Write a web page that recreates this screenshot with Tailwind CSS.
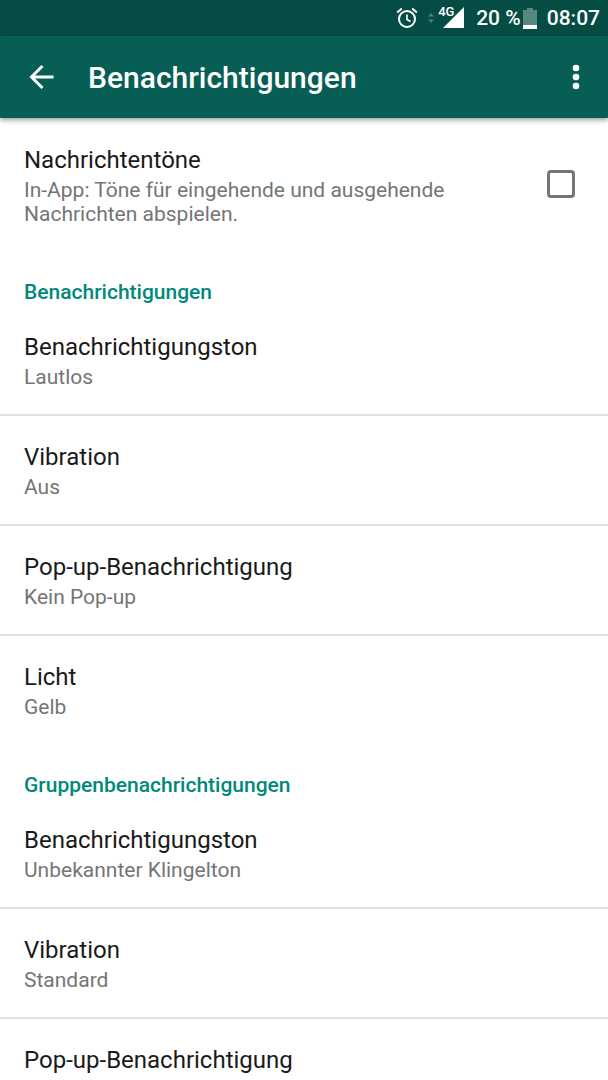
<!doctype html>
<html lang="de">
<head>
  <meta charset="UTF-8">
  <meta name="viewport" content="width=device-width, initial-scale=1.0">
  <title>Benachrichtigungen</title>
  <script src="https://cdn.jsdelivr.net/npm/@tailwindcss/browser@4"></script>
</head>
<body class="h-screen overflow-hidden bg-white font-['Roboto',sans-serif] text-[#1a1a1a]">

<div id="app" class="flex flex-col w-full">
  <!-- Status bar -->
  <div class="flex items-center justify-end h-9 pr-2 bg-[#054d44] text-white text-[21px] leading-6 font-medium">
    <svg viewBox="0 0 22 22" fill="none" stroke="currentColor" class="w-[22px] h-[22px]"><circle cx="11" cy="12" r="8" stroke-width="2"></circle><path d="M11 7.500V12.500L14.500 14.500" stroke-width="1.600"></path><path d="M1.200 5.500L5.800 1.600M20.800 5.500L16.200 1.600" stroke-width="2"></path></svg>
    <svg viewBox="0 0 6 12" fill="#4b8178" class="w-[6px] h-3 ml-[10px]"><path d="M3 1L6 4.500H0zM3 11L0 7.500H6z"></path></svg>
    <div class="relative ml-1 w-[26px] h-6">
      <span class="absolute left-0 top-0 z-10 text-[13px] leading-3 font-medium">4G</span>
      <svg viewBox="0 0 21 21" fill="currentColor" class="absolute right-0 bottom-0.5 w-[21px] h-[21px]"><path d="M21 0V21H0z"></path></svg>
    </div>
    <span class="ml-3">20 %</span>
    <svg viewBox="0 0 14 21" class="w-[14px] h-[21px] ml-0.5"><path d="M4 0H10V2H14V18H0V2H4z" fill="#568980"></path><path d="M0 17H14V21H0z" fill="#fff"></path></svg>
    <span class="ml-[10px]">08:07</span>
  </div>

  <!-- App bar -->
  <header class="relative flex items-center h-[82px] pl-6 pr-4 bg-[#075e54] text-white shadow-[0_2px_5px_rgba(0,0,0,0.4)]">
    <button type="button" aria-label="Zurück" class="cursor-pointer"><svg viewBox="0 0 36 36" fill="none" stroke="currentColor" stroke-width="3" class="w-9 h-9"><path d="M29.500 18H8M18.500 7L7.500 18L18.500 29"></path></svg></button>
    <h1 class="flex-1 ml-7 pt-0.5 text-[30px] leading-9 font-medium">Benachrichtigungen</h1>
    <button type="button" aria-label="Weitere Optionen" class="cursor-pointer"><svg viewBox="0 0 32 32" fill="currentColor" class="w-8 h-8"><circle cx="16" cy="7" r="3.300"></circle><circle cx="16" cy="16" r="3.300"></circle><circle cx="16" cy="25" r="3.300"></circle></svg></button>
  </header>

  <main class="pt-px">
    <label class="flex items-center px-6 pt-[27px] pb-[25px] cursor-pointer" for="message-tones">
      <span class="flex-1 pr-20">
        <span class="block text-[24px] leading-7">Nachrichtentöne</span>
        <span class="block mt-1 text-[21px] leading-6 text-[#757575]">In-App: Töne für eingehende und ausgehende Nachrichten abspielen.</span>
      </span>
      <input type="checkbox" id="message-tones" class="appearance-none w-7 h-7 mr-[9px] mb-1 border-3 border-[#757575] rounded-sm checked:bg-[#00897b]">
    </label>

    <section>
      <h2 class="px-6 pt-[29px] pb-0.5 text-[21px] leading-6 font-medium text-[#00897b]">Benachrichtigungen</h2>
      <div class="divide-y-2 divide-[#e0e0e0]">
        <button type="button" class="block w-full px-6 pt-[27px] pb-[25px] text-left cursor-pointer">
          <span class="block text-[24px] leading-7">Benachrichtigungston</span>
          <span class="block mt-1 text-[21px] leading-6 text-[#757575]">Lautlos</span>
        </button>
        <button type="button" class="block w-full px-6 pt-[27px] pb-[25px] text-left cursor-pointer">
          <span class="block text-[24px] leading-7">Vibration</span>
          <span class="block mt-1 text-[21px] leading-6 text-[#757575]">Aus</span>
        </button>
        <button type="button" class="block w-full px-6 pt-[27px] pb-[25px] text-left cursor-pointer">
          <span class="block text-[24px] leading-7">Pop-up-Benachrichtigung</span>
          <span class="block mt-1 text-[21px] leading-6 text-[#757575]">Kein Pop-up</span>
        </button>
        <button type="button" class="block w-full px-6 pt-[27px] pb-[25px] text-left cursor-pointer">
          <span class="block text-[24px] leading-7">Licht</span>
          <span class="block mt-1 text-[21px] leading-6 text-[#757575]">Gelb</span>
        </button>
      </div>
    </section>

    <section>
      <h2 class="px-6 pt-[29px] pb-0.5 text-[21px] leading-6 font-medium text-[#00897b]">Gruppenbenachrichtigungen</h2>
      <div class="divide-y-2 divide-[#e0e0e0]">
        <button type="button" class="block w-full px-6 pt-[27px] pb-[25px] text-left cursor-pointer">
          <span class="block text-[24px] leading-7">Benachrichtigungston</span>
          <span class="block mt-1 text-[21px] leading-6 text-[#757575]">Unbekannter Klingelton</span>
        </button>
        <button type="button" class="block w-full px-6 pt-[27px] pb-[25px] text-left cursor-pointer">
          <span class="block text-[24px] leading-7">Vibration</span>
          <span class="block mt-1 text-[21px] leading-6 text-[#757575]">Standard</span>
        </button>
        <button type="button" class="block w-full px-6 pt-[27px] pb-[25px] text-left cursor-pointer">
          <span class="block text-[24px] leading-7">Pop-up-Benachrichtigung</span>
        </button>
      </div>
    </section>
  </main>
</div>

</body>
</html>
